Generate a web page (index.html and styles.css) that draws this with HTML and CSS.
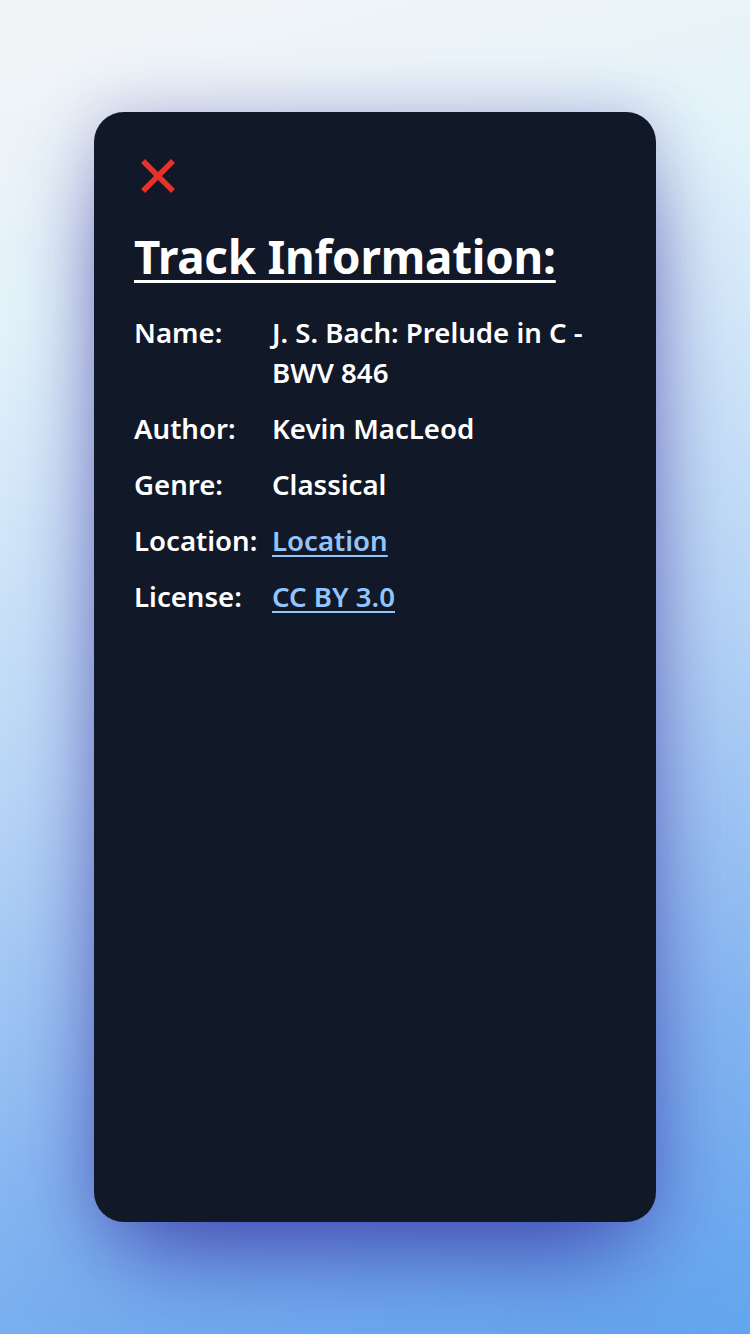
FILE: index.html
```html
<!DOCTYPE html>
<html lang="en">
<head>
<meta charset="utf-8">
<title>Track Information</title>
<link rel="stylesheet" href="styles.css">
</head>
<body>
<main class="page">
  <section class="card">
    <button class="close" aria-label="Close">
      <svg viewBox="0 0 48 48" width="48" height="48" aria-hidden="true">
        <path d="M11 11 L37 37 M37 11 L11 37" stroke="#e8312a" stroke-width="5.5" stroke-linecap="square" fill="none"/>
      </svg>
    </button>
    <h1 class="title">Track Information:</h1>
    <dl class="info">
      <dt>Name:</dt><dd>J. S. Bach: Prelude in C - BWV 846</dd>
      <dt>Author:</dt><dd>Kevin MacLeod</dd>
      <dt>Genre:</dt><dd>Classical</dd>
      <dt>Location:</dt><dd><a href="#">Location</a></dd>
      <dt>License:</dt><dd><a href="#">CC BY 3.0</a></dd>
    </dl>
  </section>
</main>
</body>
</html>
```
FILE: styles.css
```css
* { box-sizing: border-box; }
html, body { margin: 0; padding: 0; }
body {
  width: 750px;
  height: 1334px;
  font-family: "Noto Sans", "Open Sans", sans-serif;
  background: linear-gradient(165deg, #f3f4f6 0%, #e3f3fa 22%, #b9d6f6 52%, #86b6f1 78%, #62a5ee 100%);
  overflow: hidden;
}
.page {
  height: 1334px;
  display: flex;
  align-items: center;
  justify-content: center;
}
.card {
  width: 562px;
  height: 1110px;
  background: #111827;
  border-radius: 30px;
  padding: 40px 40px;
  box-shadow: 0 50px 100px -24px rgba(52, 48, 160, 0.8), 0 0 60px rgba(80, 70, 170, 0.28);
  color: #fff;
}
.close {
  display: block;
  width: 48px;
  height: 48px;
  padding: 0;
  border: 0;
  background: none;
  cursor: pointer;
}
.close svg { display: block; }
.title {
  margin: 24px 0 24px;
  font-size: 45.7px;
  line-height: 64px;
  font-weight: 700;
  text-decoration: underline;
  text-decoration-thickness: 3px;
  text-underline-offset: 6px;
  letter-spacing: -0.2px;
}
.info {
  margin: 0;
  display: grid;
  grid-template-columns: 138px 1fr;
  row-gap: 16px;
  font-size: 27.6px;
  line-height: 40px;
  font-weight: 600;
}
.info dt, .info dd { margin: 0; }
.info a {
  color: #93c5fd;
  text-decoration: underline;
  text-decoration-thickness: 2px;
  text-underline-offset: 4px;
}
```
